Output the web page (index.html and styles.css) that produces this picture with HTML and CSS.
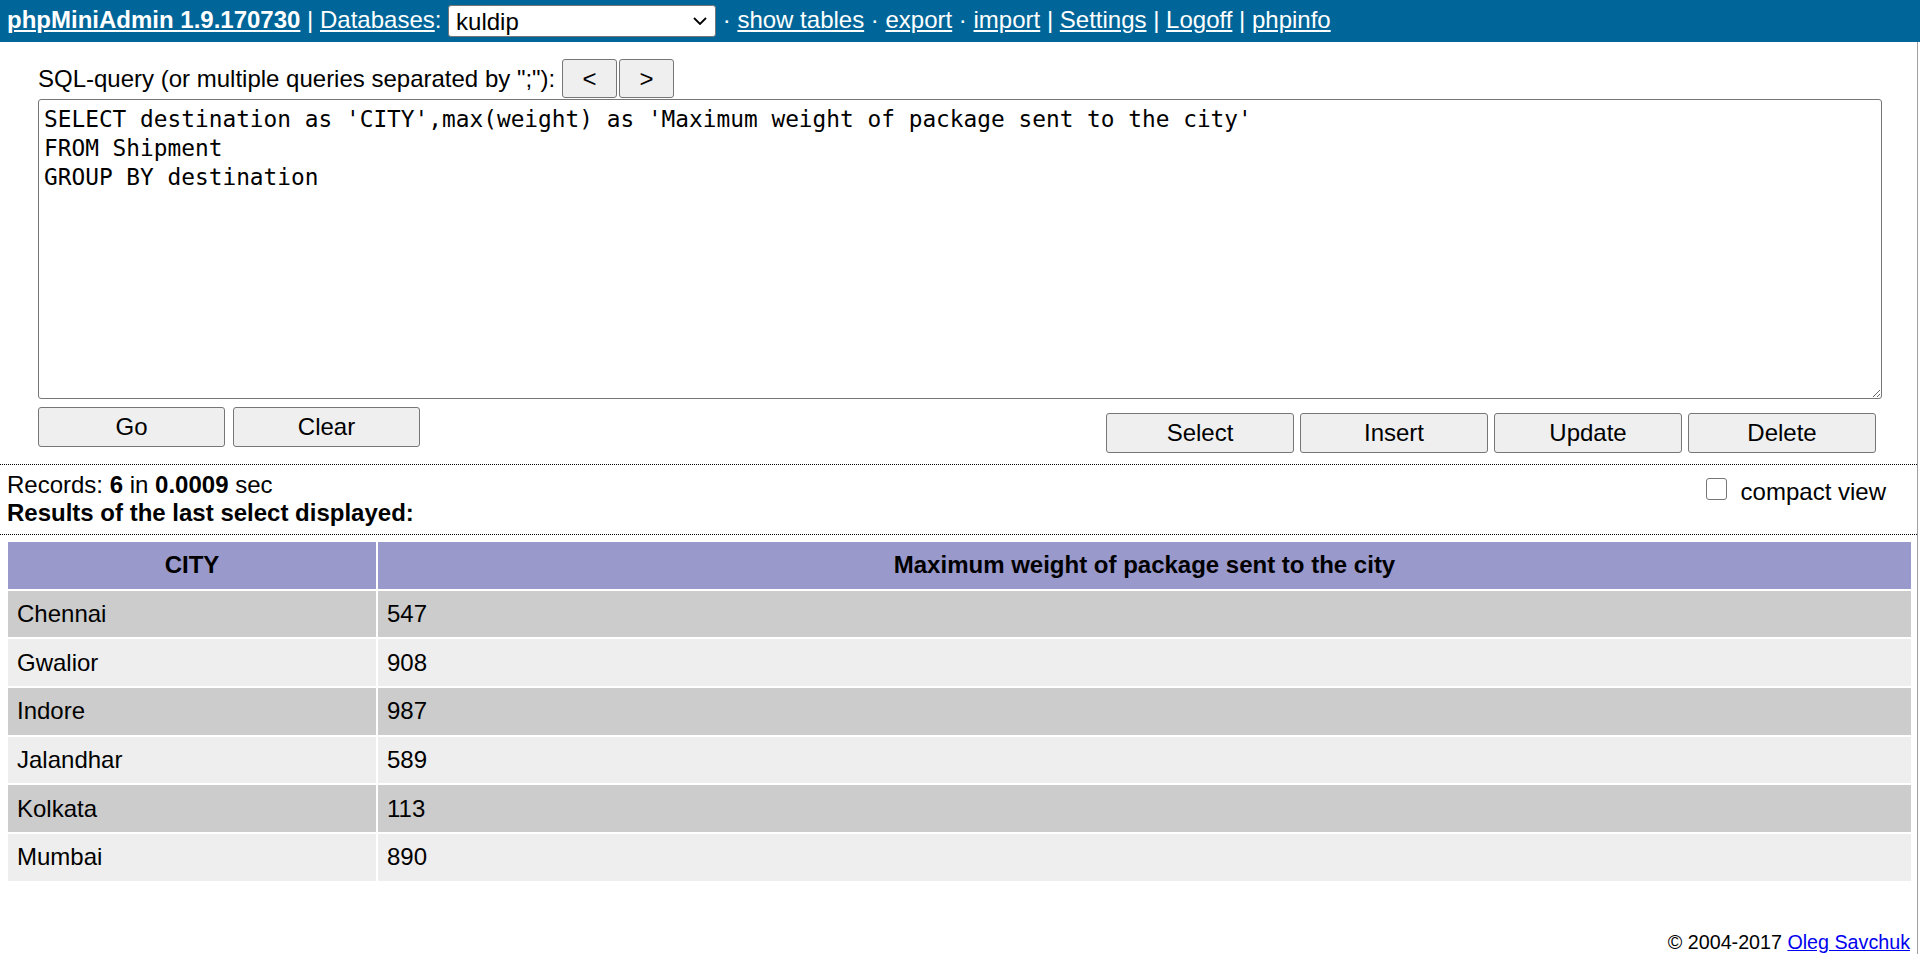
FILE: index.html
```html
<!DOCTYPE html>
<html>
<head>
<meta charset="utf-8">
<title>phpMiniAdmin</title>
<link rel="stylesheet" href="styles.css">
</head>
<body>
<div class="inv"><a href="#" class="brand">phpMiniAdmin 1.9.170730</a> | <a href="#">Databases</a>: <span class="dbsel"><select class="db"><option>kuldip</option></select><svg class="chev" viewBox="0 0 14 8" width="14" height="8"><path d="M1 1L7 7L13 1" fill="none" stroke="#000" stroke-width="1.8"/></svg></span> · <a href="#">show tables</a> · <a href="#">export</a> · <a href="#">import</a> | <a href="#">Settings</a> | <a href="#">Logoff</a> | <a href="#">phpinfo</a></div>
<div class="page">
  <div class="qform">
    <div class="qhead">SQL-query (or multiple queries separated by ";"): <button class="btn qnav">&lt;</button><button class="btn qnav">&gt;</button></div>
    <textarea class="sql" spellcheck="false">SELECT destination as 'CITY',max(weight) as 'Maximum weight of package sent to the city'
FROM Shipment
GROUP BY destination</textarea>
    <div class="qbtns">
      <div class="grp-left"><button class="btn sbtn">Go</button><button class="btn sbtn">Clear</button></div>
      <div class="grp-right"><button class="btn sbtn">Select</button><button class="btn sbtn">Insert</button><button class="btn sbtn">Update</button><button class="btn sbtn">Delete</button></div>
    </div>
  </div>
  <div class="stat">
    <div class="compact"><input type="checkbox" class="cbox"><span>compact view</span></div>
    <div>Records: <b>6</b> in <b>0.0009</b> sec</div>
    <div><b>Results of the last select displayed:</b></div>
  </div>
  <div class="results">
    <table class="res">
      <tr class="h"><th class="c1">CITY</th><th>Maximum weight of package sent to the city</th></tr>
      <tr class="e"><td>Chennai</td><td>547</td></tr>
      <tr class="o"><td>Gwalior</td><td>908</td></tr>
      <tr class="e"><td>Indore</td><td>987</td></tr>
      <tr class="o"><td>Jalandhar</td><td>589</td></tr>
      <tr class="e"><td>Kolkata</td><td>113</td></tr>
      <tr class="o"><td>Mumbai</td><td>890</td></tr>
    </table>
  </div>
  <div class="footer">© 2004-2017 <a href="#">Oleg Savchuk</a></div>
</div>
</body>
</html>
```
FILE: styles.css
```css
* { box-sizing: border-box; }
html, body { margin: 0; padding: 0; background: #fff; }
body {
  font-family: "Liberation Sans", Arial, sans-serif;
  font-size: 24px;
  color: #000;
}

.inv {
  background: #069;
  color: #fff;
  height: 42px;
  padding: 5px 7px;
  line-height: 30px;
  white-space: nowrap;
}
.inv a { color: #fff; }
.brand { font-weight: bold; }

.dbsel {
  position: relative;
  display: inline-block;
  vertical-align: top;
}
.db {
  -webkit-appearance: none;
  appearance: none;
  display: block;
  width: 268px;
  height: 32px;
  font: 24px "Liberation Sans", Arial, sans-serif;
  color: #000;
  background: #fff;
  border: 1px solid #767676;
  border-radius: 3px;
  padding: 0 30px 0 7px;
}
.chev {
  position: absolute;
  right: 9px;
  top: 12px;
  pointer-events: none;
}

.page {
  margin-right: 2px;
  border-right: 1px solid #a0a0a0;
}

.qform {
  padding: 17px 35px 11px 38px;
  border-bottom: 1px dotted #000;
}
.qhead { white-space: nowrap; }

.btn {
  font: 24px "Liberation Sans", Arial, sans-serif;
  color: #000;
  background: #efefef;
  border: 1px solid #767676;
  border-radius: 3px;
  padding: 0;
  height: 40px;
  margin: 0;
}
.qnav { width: 55px; height: 39px; }
.qnav + .qnav { margin-left: 2px; }

.sql {
  display: block;
  width: 100%;
  height: 300px;
  margin: 1px 0 0;
  font-family: "DejaVu Sans Mono", monospace;
  font-size: 22.8px;
  line-height: 29px;
  padding: 5px 5px;
  border: 1px solid #767676;
  border-radius: 3px;
  color: #000;
  background: #fff;
}

.qbtns {
  display: flex;
  justify-content: space-between;
  align-items: flex-start;
}
.grp-left { display: flex; gap: 8px; margin-top: 8px; }
.grp-right { display: flex; gap: 6px; margin-top: 14px; margin-right: 6px; }
.grp-left .sbtn { width: 187px; }
.grp-right .sbtn { width: 188px; }

.stat {
  padding: 6px 7px 7px;
  line-height: 28px;
  border-bottom: 1px dotted #000;
}
.compact {
  float: right;
  margin: 7px 24px 0 0;
  display: flex;
  align-items: flex-start;
  gap: 14px;
}
.cbox {
  -webkit-appearance: none;
  appearance: none;
  width: 21px;
  height: 22px;
  margin: 0;
  border: 1px solid #767676;
  border-radius: 3px;
  background: #fff;
}

.results { padding: 5px 4px 0 6px; }
table.res {
  width: 100%;
  border-collapse: separate;
  border-spacing: 2px;
}
table.res th, table.res td {
  height: 46.7px;
  padding: 0 9px;
  vertical-align: middle;
  text-align: left;
  font-weight: normal;
}
table.res th {
  background: #99c;
  font-weight: bold;
  text-align: center;
}
table.res th.c1 { width: 368px; }
tr.e td { background: #ccc; }
tr.o td { background: #eee; }

.footer {
  margin-top: 47px;
  padding: 0 7px 0 0;
  text-align: right;
  font-size: 19.7px;
  line-height: 24px;
}
.footer a { color: #00e; }
```
